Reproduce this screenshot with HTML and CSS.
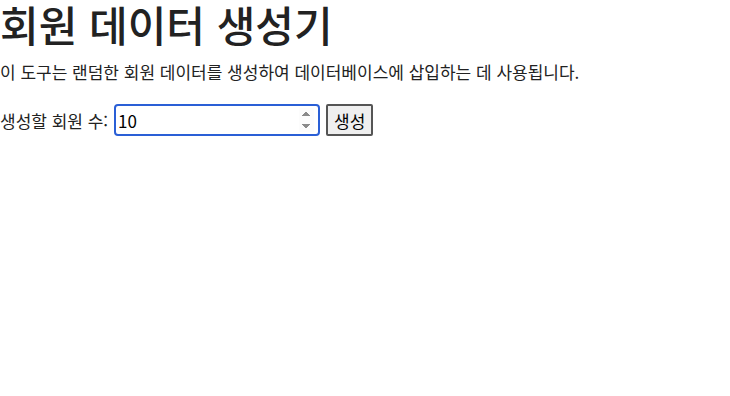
FILE: index.html
```html
<!DOCTYPE html>
<html lang="ko">
<head>
    <meta charset="UTF-8">
    <meta name="viewport" content="width=device-width, initial-scale=1.0">
    <title>회원 데이터 생성기</title>
    <link rel="stylesheet" href="styles.css">
</head>
<body>
    <h1>회원 데이터 생성기</h1>
    <p class="intro">이 도구는 랜덤한 회원 데이터를 생성하여 데이터베이스에 삽입하는 데 사용됩니다.</p>
    <form class="gen-form">
        <label for="memberCount">생성할 회원 수:</label>
        <input type="number" id="memberCount" class="count-input" value="10" min="1">
        <button type="submit" class="gen-button">생성</button>
    </form>
</body>
</html>
```

FILE: styles.css
```css
body {
    margin: 0;
    font-family: "Noto Sans CJK KR", "Noto Sans", sans-serif;
    font-size: 17px;
    color: #222;
    background: #fff;
}
h1 {
    margin: 0;
    font-size: 42px;
    font-weight: 500;
    line-height: 48px;
}
.intro {
    margin: 10px 0 18px;
    line-height: 28px;
}
.gen-form {
    display: flex;
    align-items: center;
    gap: 6px;
}
.count-input {
    box-sizing: border-box;
    width: 206px;
    height: 32px;
    padding: 0 4px 0 2px;
    font-family: inherit;
    font-size: 17px;
    color: #000;
    border: 2px solid #2a5fd6;
    border-radius: 4px;
    outline: none;
}
.count-input::-webkit-inner-spin-button {
    opacity: 1;
}
.gen-button {
    box-sizing: border-box;
    height: 32px;
    padding: 0 6px;
    font-family: inherit;
    font-size: 17px;
    color: #000;
    background: #efefef;
    border: 2px solid #555;
    border-radius: 2px;
}
```
